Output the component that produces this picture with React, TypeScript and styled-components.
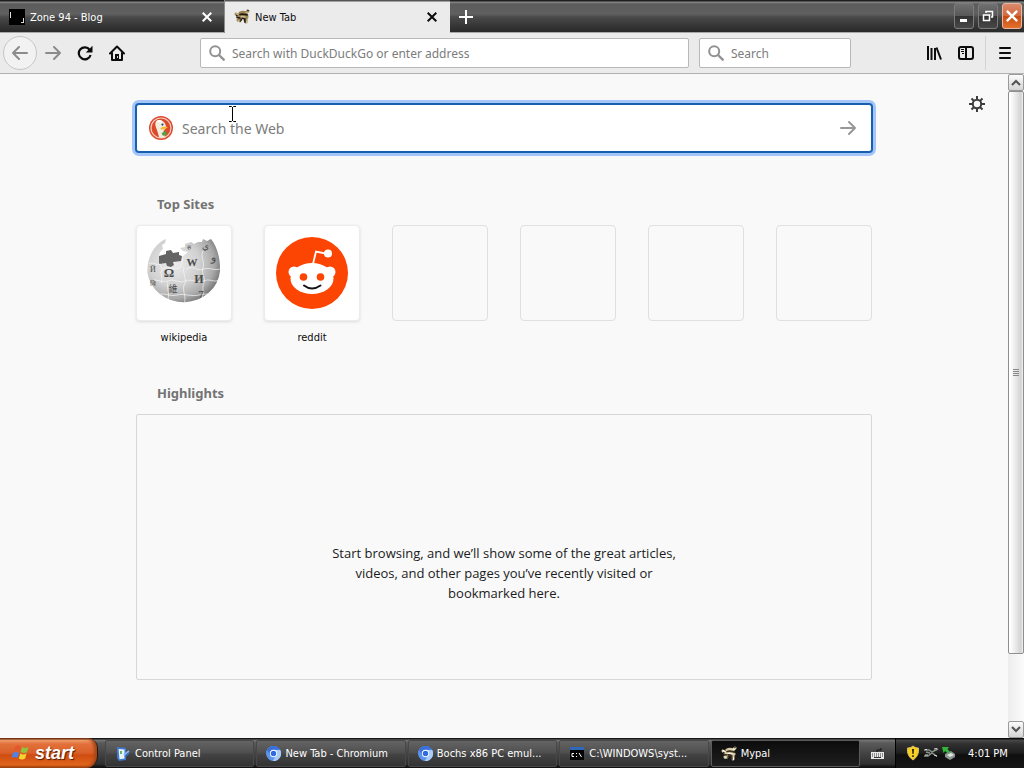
import React from 'react';
import styled, { createGlobalStyle, css } from 'styled-components';

const uiFont = '"DejaVu Sans Condensed", "Noto Sans", sans-serif';
const pageFont = '"Noto Sans", "Open Sans", sans-serif';

const GlobalStyle = createGlobalStyle`
  *, *::before, *::after { box-sizing: border-box; }
  body { margin: 0; background: #f9f9f9; font-family: ${uiFont}; }
  button { margin: 0; padding: 0; border: 0; background: none; color: inherit; font: inherit; }
  svg { display: block; flex: none; }
  h2, p, ul { margin: 0; padding: 0; }
`;

const Screen = styled.div`
  min-height: 100vh;
  display: flex;
  flex-direction: column;
`;

/* ---------- title bar ---------- */

const TitleBar = styled.header`
  height: 33px;
  display: flex;
  background: linear-gradient(#1e1e1e 0, #1e1e1e 1px, #8a8a8a 2px, #5c5c5c 4px, #606060 14px, #4a4a4a 17px, #333 27px, #2a2a2a 32px, #a8a8a8 32px);
`;

const Tab = styled.div<{ $active?: boolean }>`
  width: 22%;
  max-width: 225px;
  display: flex;
  align-items: center;
  gap: 5px;
  padding: 1px 11px 0 9px;
  font-size: 11px;
  color: ${p => (p.$active ? '#0c0c0d' : '#fff')};
  ${p =>
    p.$active
      ? css`
          background: linear-gradient(#555 1px, #ebebeb 2px);
        `
      : css`
          padding-right: 10px;
          border-right: 1px solid #8c8c8c;
        `}
`;

const TabLabel = styled.span`
  flex: 1;
  white-space: nowrap;
  overflow: hidden;
`;

const TabClose = styled.button`
  width: 14px;
  height: 14px;
  display: grid;
  place-items: center;
`;

const NewTab = styled.button`
  width: 32px;
  display: grid;
  place-items: center;
  color: #fff;
`;

const WindowButtons = styled.div`
  margin-left: auto;
  display: flex;
  gap: 4px;
  padding: 3px 2px 0 0;
`;

const WindowButton = styled.button<{ $close?: boolean }>`
  width: 20px;
  height: 26px;
  display: grid;
  place-items: center;
  color: #fff;
  border: 1px solid ${p => (p.$close ? '#e9b8a0' : '#7c7c7c')};
  border-radius: 3px;
  background: ${p =>
    p.$close
      ? 'linear-gradient(#d98a6c, #d2683e 50%, #c64d14 52%, #e4702c)'
      : 'linear-gradient(#707070, #575757 50%, #333 52%, #484848)'};
`;

/* ---------- navigation bar ---------- */

const NavBar = styled.nav`
  height: 41px;
  display: flex;
  align-items: center;
  padding: 0 3px;
  background: #ebebeb;
  border-bottom: 1px solid #b1b1b3;
  color: #0c0c0d;
`;

const NavButton = styled.button<{ $round?: boolean; $dim?: boolean }>`
  width: ${p => (p.$round ? '34px' : '32px')};
  height: ${p => (p.$round ? '34px' : '32px')};
  display: grid;
  place-items: center;
  color: ${p => (p.$dim ? '#8b8b8b' : '#0c0c0d')};
  ${p =>
    p.$round &&
    css`
      border: 1px solid #c6c6c6;
      border-radius: 50%;
      background: #f2f2f2;
    `}
`;

const Spring = styled.div`
  flex: 67 1 0;
`;

const Field = styled.label<{ $grow?: boolean }>`
  height: 30px;
  min-width: 0;
  ${p => (p.$grow ? 'flex: 471 1 0;' : 'width: 152px; margin-left: 10px;')}
  display: flex;
  align-items: center;
  gap: 7px;
  padding: 0 8px;
  border: 1px solid #b8b8b8;
  border-radius: 2px;
  background: #fff;
  color: #8a8a8a;
`;

const FieldInput = styled.input`
  flex: 1;
  min-width: 0;
  width: 0;
  padding: 0;
  border: 0;
  outline: 0;
  background: none;
  font: 12px ${pageFont};
  color: #0c0c0d;
  &::placeholder { color: #7c7c7c; opacity: 1; }
`;

const Divider = styled.div`
  width: 1px;
  height: 34px;
  margin: 0 3px;
  background: #d3d3d3;
`;

/* ---------- new tab page ---------- */

const Viewport = styled.div`
  flex: 1;
  display: flex;
  background: #f9f9f9;
`;

const Page = styled.main`
  flex: 1;
  display: grid;
  grid-template-columns: 1fr minmax(0, 736px) 1fr;
  align-items: start;
  font-family: ${pageFont};
`;

const Content = styled.div`
  grid-column: 2;
  padding: 30px 0 56px;
`;

const SettingsButton = styled.button`
  justify-self: end;
  margin: 22px 23px 0 0;
  color: #3d3d40;
`;

const SearchForm = styled.form`
  position: relative;
  height: 48px;
  display: flex;
  align-items: center;
  gap: 9px;
  padding: 0 13px 0 12px;
  border: 1px solid #1561b0;
  border-radius: 3px;
  background: #fff;
  box-shadow: 0 0 0 1px #1561b0, 0 0 0 4px #a5c5f8;
`;

const SearchInput = styled(FieldInput)`
  font-size: 14px;
  height: 32px;
`;

const SearchGo = styled.button`
  width: 20px;
  height: 20px;
  display: grid;
  place-items: center;
  color: #989898;
`;

const Pointer = styled.svg`
  position: absolute;
  left: 92px;
  top: 1px;
`;

const SectionTitle = styled.h2<{ $top: number }>`
  margin-top: ${p => p.$top}px;
  padding-left: 21px;
  font-size: 13px;
  line-height: 20px;
  font-weight: 700;
  color: #737373;
`;

const Sites = styled.ul`
  display: grid;
  grid-template-columns: repeat(6, 96px);
  justify-content: space-between;
  margin-top: 11px;
  list-style: none;
`;

const SiteLink = styled.a`
  display: block;
  text-align: center;
  text-decoration: none;
  font-family: ${uiFont};
  font-size: 11px;
  line-height: 16px;
  color: #0c0c0d;
`;

const Tile = styled.span<{ $empty?: boolean }>`
  height: 96px;
  display: grid;
  place-items: center;
  border: 1px solid ${p => (p.$empty ? '#e0e0e0' : '#ececec')};
  border-radius: 4px;
  ${p => !p.$empty && 'margin-bottom: 9px; background: #fff; box-shadow: 0 1px 3px #dcdcdc;'}
`;

const Highlights = styled.section`
  height: 266px;
  margin-top: 11px;
  display: flex;
  flex-direction: column;
  align-items: center;
  padding-top: 128px;
  border: 1px solid #d7d7db;
  border-radius: 2px;
`;

const EmptyMessage = styled.p`
  width: 346px;
  text-align: center;
  font-family: "Open Sans", "Noto Sans", sans-serif;
  font-size: 13px;
  line-height: 20px;
  color: #1b1b22;
`;

/* ---------- scroll bar ---------- */

const ScrollBar = styled.div`
  width: 16px;
  display: flex;
  flex-direction: column;
  background: linear-gradient(90deg, #ededed, #fbfbfb);
`;

const ScrollButton = styled.button`
  height: 17px;
  display: grid;
  place-items: center;
  border: 1px solid #999;
  border-radius: 2px;
  background: linear-gradient(#fcfcfc, #d4d4d4);
  color: #555;
`;

const ScrollThumb = styled.div`
  flex: 564 1 0;
  display: grid;
  place-items: center;
  border: 1px solid #8f8f8f;
  border-radius: 2px;
  background: linear-gradient(90deg, #fff 1px, #f0f0f0 5px, #d2d2d2 12px, #f4f4f4);
`;

const ScrollRest = styled.div`
  flex: 67 1 0;
`;

/* ---------- task bar ---------- */

const TaskBar = styled.footer`
  height: 30px;
  display: flex;
  color: #fff;
  font-size: 11px;
  background: linear-gradient(#161616 1px, #777 2px, #5a5a5a 5px, #444 15px, #2f2f2f 26px, #111 29px);
`;

const StartButton = styled.button`
  width: 98px;
  display: flex;
  align-items: center;
  gap: 5px;
  padding: 0 0 0 10px;
  border-right: 1px solid #2b1508;
  border-radius: 0 10px 12px 0;
  background: linear-gradient(#5e2a12 1px, #f0a070 2px, #e2703a 6px, #d9602a 15px, #cf4c10 17px, #e0651c 27px, #8f3808);
  box-shadow: inset -3px 0 3px #a5481c;
  font: italic 700 18px "Liberation Sans", sans-serif;
  text-shadow: 1px 1px 1px #4d1c05;
`;

const Tasks = styled.div`
  flex: 1;
  min-width: 0;
  display: flex;
  gap: 2px;
  padding: 2px 0 1px 7px;
`;

const Task = styled.button<{ $active?: boolean }>`
  flex: 1;
  min-width: 0;
  display: flex;
  align-items: center;
  gap: 4px;
  padding: 0 9px;
  white-space: nowrap;
  overflow: hidden;
  border: 1px solid ${p => (p.$active ? '#5a5a5a' : '#484848')};
  border-radius: 2px;
  background: ${p =>
    p.$active ? 'linear-gradient(#0c0c0c, #1e1e1e)' : 'linear-gradient(#646464, #505050 45%, #424242 55%, #333)'};
`;

const Keyboard = styled.button`
  width: 35px;
  display: grid;
  place-items: center;
`;

const Tray = styled.div`
  width: 129px;
  display: flex;
  align-items: center;
  gap: 2px;
  padding-left: 9px;
  border-left: 1px solid #000;
  background: linear-gradient(#0c0c0c 1px, #4a4a4a 2px, #303030 6px, #1e1e1e 15px, #0e0e0e 17px, #161616);
`;

const Clock = styled.time`
  margin-left: 9px;
  white-space: nowrap;
`;

/* ---------- drawings ---------- */

const Cross = ({ size = 10, width = 2 }: { size?: number; width?: number }) => (
  <svg width={size} height={size} viewBox="0 0 10 10" stroke="currentColor" strokeWidth={width} fill="none">
    <path d="M.7.7l8.6 8.6M9.3.7L.7 9.3" />
  </svg>
);

const Arrow = ({ back }: { back?: boolean }) => (
  <svg width="18" height="18" viewBox="0 0 18 18" fill="none" stroke="currentColor" strokeWidth="2" strokeLinecap="round" strokeLinejoin="round">
    {back ? <path d="M16 9H2M8 3L2 9l6 6" /> : <path d="M2 9h14M10 3l6 6-6 6" />}
  </svg>
);

const Magnifier = () => (
  <svg width="16" height="16" viewBox="0 0 16 16" fill="none" stroke="#929292" strokeWidth="2" strokeLinecap="round">
    <circle cx="6.2" cy="6.2" r="5" />
    <path strokeWidth="2.400" d="M10 10l4.700 4.700" />
  </svg>
);

const BlogIcon = () => (
  <svg width="16" height="16" viewBox="0 0 16 16">
    <path fill="#000" d="M0 0h16v16H0z" />
    <path stroke="#ddd" strokeWidth="1" d="M1.5 3v6M14.5 9v5M12 13.5h3" />
  </svg>
);

const Raccoon = ({ light }: { light?: boolean }) => {
  const fur = light ? '#d6c9a4' : '#9a8458';
  const dark = light ? '#3c321f' : '#241a0e';
  return (
    <svg width="16" height="16" viewBox="0 0 16 16" fill="none" strokeLinecap="round">
      <path stroke={fur} strokeWidth="3" d="M2 5l3 2M6 4c3-1.500 5-.5 6 0l2-2M5 7c3-1 6 0 8 1M4 11l2-1M12 9l0 4" />
      <path stroke={dark} strokeWidth="1.600" d="M6 5.500c3-1 5 0 7.500.5M3 8.500l3 .5M8 9l3 1M6 12.500l1.500-2M11 13l-.5-2" />
      <path stroke={light ? '#fff' : '#d9c48c'} strokeWidth="1" d="M2 4.500l2 1M7 7.500l4 .3M12 3.500l2-.5M4 12l2 0M12.500 12v1.500" />
      <path fill={dark} d="M2 6h1.500v1.500H2zM12.500.8L15 1l-1 1.500z" />
    </svg>
  );
};

const Chromium = () => (
  <svg width="15" height="15" viewBox="0 0 16 16">
    <circle cx="8" cy="8" r="8" fill="#5d95ee" />
    <path d="M8 4h7a8 8 0 0 1-8 12l4-6z" fill="#a9cbfa" />
    <path d="M1.2 4A8 8 0 0 1 15 4H8a4 4 0 0 0-3.5 6z" fill="#3a6fd8" />
    <circle cx="8" cy="8" r="3.9" fill="#fff" />
    <circle cx="8" cy="8" r="2.9" fill="#2f6ce0" />
  </svg>
);

const DuckIcon = () => (
  <svg width="24" height="24" viewBox="0 0 24 24">
    <circle cx="12" cy="12" r="12" fill="#dc4a2c" />
    <circle cx="12" cy="12" r="10" fill="none" stroke="#f6cfc2" strokeWidth="1.200" />
    <path fill="#f3ebdd" d="M7 5.500c1.500-2 5-2 7.500.2 2.200 2 2.700 4.300 2.500 6.300l-2.500 3 1.500 6.300c-1.800.7-4 .8-6 .1C9.600 18 8 14.500 7 11.500 6.200 9 6 7 7 5.500z" />
    <path fill="#fff" d="M8 5c2-1.500 4-1 5.500.5L12 7.500z" />
    <path fill="#f6b92a" d="M11.500 12c2-1.600 5-1.600 7.300-1-.6 1.500-3.500 2.300-6.800 2.600z" />
    <path fill="#4fa243" d="M12.500 17l4.500-2 .8 4-4 .8z" />
    <circle cx="13.500" cy="8.600" r="1.100" fill="#2c4565" />
  </svg>
);

const Wikipedia = () => (
  <svg width="76" height="76" viewBox="0 0 76 76">
    <defs>
      <radialGradient id="globe" cx="36%" cy="38%" r="66%">
        <stop offset="0" stopColor="#ededed" />
        <stop offset=".55" stopColor="#d0d0d0" />
        <stop offset=".85" stopColor="#a9a9a9" />
        <stop offset="1" stopColor="#7e7e7e" />
      </radialGradient>
    </defs>
    <path fill="url(#globe)" d="M20 4l-1 4-3 2 1 4-3 3-1 4 1 4 8 1 14-4 6-5-5-1-3-3 5-1 0-3 6-2 3 2 4-2 4 0 1-3 4 2 4-2C71 11 74.500 24 74 36a36.500 34 0 0 1-72.500 2C.5 23 8 9 20 4z" />
    <path fill="#646464" d="M13 21l7-2 0-3 5-1 2 3 6-1 0 3 3 1-1 5-8 1 1 3-3 2-4-1-1-3-7 1z" />
    <g fill="none" stroke="#f6f6f6" strokeWidth=".7">
      <path d="M3 29c5-3 7 2 11 0l2 5c6-3 14 2 19-2l2-9M16 34c-3 6 2 9-1 14M2 46c8-3 13 2 20 0 6-3 11 3 17 0 7-3 12 3 19 0 5-3 10 2 15-1M38 32c-2 7 4 12 0 18-2 7 3 11 0 20M57 16c-3 6 2 11 0 17-2 6 3 10 1 15-3 5 1 9-2 15M40 34c8-4 12 3 18 0 5-2 11 2 16 0M11 60c7-3 13 2 20 0s14 2 22 0 8 0 12-2M22 47c-2 6 2 10 0 17" />
    </g>
    <g fill="#4a4a4a" fontFamily="Liberation Serif, Noto Sans CJK SC, serif" textAnchor="middle">
      <text x="23" y="42" fontSize="13" fontWeight="700">Ω</text>
      <text x="46" y="31" fontSize="11" fontWeight="700">W</text>
      <text x="53" y="48" fontSize="12" fontWeight="700">И</text>
      <text x="27" y="57" fontSize="9">維</text>
      <text x="67" y="26" fontSize="11">و</text>
      <text x="55" y="63" fontSize="11">7</text>
      <text x="59" y="14" fontSize="9">ي</text>
      <text x="7" y="37" fontSize="8">Й</text>
      <text x="7" y="51" fontSize="7">वि</text>
      <text x="43" y="15" fontSize="7">रु</text>
    </g>
  </svg>
);

const Reddit = () => (
  <svg width="72" height="72" viewBox="0 0 72 72">
    <circle cx="36" cy="36" r="36" fill="#fc4403" />
    <path d="M37 27l3-12.500 12 2.500" fill="none" stroke="#fff" strokeWidth="1.800" />
    <g fill="#fff">
      <circle cx="52" cy="16.500" r="4" />
      <circle cx="18" cy="35" r="5.500" />
      <circle cx="54" cy="35" r="5.500" />
      <ellipse cx="36" cy="41.500" rx="21.500" ry="15.500" />
    </g>
    <circle cx="27.500" cy="40" r="3.800" fill="#fc4403" />
    <circle cx="44.500" cy="40" r="3.800" fill="#fc4403" />
    <path d="M28 48.500c5 3.800 11 3.800 16.500 0" fill="none" stroke="#151515" strokeWidth="2" strokeLinecap="round" />
  </svg>
);

const Gear = () => (
  <svg width="16" height="16" viewBox="0 0 16 16" fill="none" stroke="currentColor">
    <circle cx="8" cy="8" r="4.200" strokeWidth="2" />
    <path strokeWidth="2" d="M8 0v3.500M8 12.500V16M0 8h3.500M12.500 8H16M2.500 2.500l2.300 2.300M11.200 11.200l2.300 2.300M2.500 13.500l2.300-2.300M11.200 4.800l2.300-2.300" />
  </svg>
);

const Chevron = ({ down }: { down?: boolean }) => (
  <svg width="10" height="7" viewBox="0 0 10 7" fill="none" stroke="currentColor" strokeWidth="2.200">
    <path d={down ? 'M1 1l4 4 4-4' : 'M1 6l4-4 4 4'} />
  </svg>
);

const WindowsFlag = () => (
  <svg width="20" height="18" viewBox="0 0 20 18">
    <path fill="#e4582e" d="M5 2.500c2-1.500 4-1.500 6 0l-1.500 5c-2-1.300-4-1.300-6 0z" />
    <path fill="#8fc53a" d="M12 3c2 1.300 4 1.300 6.500 0L17 8c-2 1.300-4 1.300-6.300 0z" />
    <path fill="#4f83e8" d="M3 9c2-1.500 4-1.500 6 0l-1.500 5c-2-1.300-4-1.300-6 0z" />
    <path fill="#f8d432" d="M10.300 9.500c2 1.300 4 1.300 6.300 0l-1.500 5c-2 1.300-4 1.300-6.300 0z" />
  </svg>
);

const ControlPanelIcon = () => (
  <svg width="16" height="16" viewBox="0 0 16 16">
    <path fill="#3f78cf" d="M2 1l9 1v12l-7 1-2-3z" />
    <path fill="#e8f3fc" d="M3.500 3l6 .5v9l-5 .8z" />
    <path fill="#6bb06a" d="M5 5h2v3H5z" />
    <path stroke="#7fb2f2" strokeWidth="2" d="M9 9l5-4" />
    <path stroke="#386dc4" strokeWidth="1.500" d="M10 11l4-4" />
  </svg>
);

const ConsoleIcon = () => (
  <svg width="16" height="14" viewBox="0 0 16 14">
    <path fill="#050505" d="M1 1h14v12H1z" />
    <path fill="#2e68ba" d="M1 0h14v3H1z" />
    <path fill="none" stroke="#fff" d="M5 6.500H3v3h2M7.500 6v1M7.500 9v1M10 6l2.500 4" />
  </svg>
);

const KeyboardIcon = () => (
  <svg width="13" height="13" viewBox="0 0 13 13">
    <path fill="none" stroke="#111" d="M6 5V3h4V1" />
    <path fill="#e8e8e8" d="M0 5h13v7H0z" />
    <path stroke="#333" strokeDasharray="1 1" d="M1 7h11M1 9h11" />
    <path stroke="#333" d="M3 10.500h7" />
  </svg>
);

const ShieldIcon = () => (
  <svg width="16" height="16" viewBox="0 0 16 16">
    <path fill="#f6cf25" stroke="#d9bd6a" d="M8 1c2 1.500 3.500 2 5.500 2 .4 5-1 9-5.500 12C3.500 12 2 8 2.500 3 4.500 3 6 2.500 8 1z" />
    <path fill="#2b2206" d="M7 4h2l-.4 5H7.400zM7.200 10.300h1.600V12H7.200z" />
  </svg>
);

const NetworkIcon = () => (
  <svg width="16" height="14" viewBox="0 0 16 14" fill="none" stroke="#8a928a" strokeWidth="1.500">
    <path d="M1 4h5l3 2 6-3M1 10h4l4-3 5 3.500M3 6l4 1" />
    <path stroke="#d7dbd7" strokeWidth="1" d="M2 9h3M11 9l3 1M11 3l3-.5M2 3.500h2" />
  </svg>
);

const DeviceIcon = () => (
  <svg width="16" height="16" viewBox="0 0 16 16">
    <path fill="#8d9590" d="M4 9l6-3 4 3v3l-5 3-5-3z" />
    <path fill="#dde3dd" d="M6 10l4-2 3 2-4 2z" />
    <path fill="#33b53a" d="M1 2l7 0-1.500 2L9 7 7 8.500 4 6 2.500 8z" />
  </svg>
);

/* ---------- page ---------- */

const sites = [
  { name: 'wikipedia', href: '#wikipedia', icon: <Wikipedia /> },
  { name: 'reddit', href: '#reddit', icon: <Reddit /> },
];

const tasks = [
  { label: 'Control Panel', icon: <ControlPanelIcon /> },
  { label: 'New Tab - Chromium', icon: <Chromium /> },
  { label: 'Bochs x86 PC emul...', icon: <Chromium /> },
  { label: 'C:\\WINDOWS\\syst...', icon: <ConsoleIcon /> },
  { label: 'Mypal', icon: <Raccoon light />, active: true },
];

export default function App() {
  return (
    <Screen>
      <GlobalStyle />
      <TitleBar>
        <Tab>
          <BlogIcon />
          <TabLabel>Zone 94 - Blog</TabLabel>
          <TabClose aria-label="Close tab"><Cross /></TabClose>
        </Tab>
        <Tab $active>
          <Raccoon />
          <TabLabel>New Tab</TabLabel>
          <TabClose aria-label="Close tab"><Cross /></TabClose>
        </Tab>
        <NewTab aria-label="Open a new tab">
          <svg width="14" height="14" viewBox="0 0 14 14" stroke="currentColor" strokeWidth="2"><path d="M7 0v14M0 7h14" /></svg>
        </NewTab>
        <WindowButtons>
          <WindowButton aria-label="Minimize">
            <svg width="12" height="14" viewBox="0 0 12 14"><path fill="currentColor" d="M2 10h7v3H2z" /></svg>
          </WindowButton>
          <WindowButton aria-label="Restore">
            <svg width="12" height="12" viewBox="0 0 12 12" fill="none" stroke="currentColor">
              <path strokeWidth="1.500" d="M4 3V1.500h6.500V7H9M1.500 5h6v5.500h-6z" />
            </svg>
          </WindowButton>
          <WindowButton $close aria-label="Close"><Cross size={12} /></WindowButton>
        </WindowButtons>
      </TitleBar>

      <NavBar>
        <NavButton $round $dim aria-label="Back"><Arrow back /></NavButton>
        <NavButton $dim aria-label="Forward"><Arrow /></NavButton>
        <NavButton aria-label="Reload">
          <svg width="16" height="16" viewBox="0 0 16 16" fill="none" stroke="currentColor" strokeWidth="2.200">
            <path d="M12.700 4.800A6 6 0 1 0 13.600 10" />
            <path fill="currentColor" stroke="none" d="M15.500.8v6.700H8.800z" />
          </svg>
        </NavButton>
        <NavButton aria-label="Home">
          <svg width="16" height="16" viewBox="0 0 16 16" fill="none" stroke="currentColor" strokeWidth="2" strokeLinejoin="round" strokeLinecap="round">
            <path d="M1 8.500L8 1.500l7 7M3 8v7h10V8" />
            <path fill="currentColor" stroke="none" d="M6 9h4v6H6z" />
            <path stroke="#ebebeb" strokeWidth="1" d="M8.500 11.500v1" />
          </svg>
        </NavButton>
        <Spring />
        <Field $grow>
          <Magnifier />
          <FieldInput aria-label="Address" placeholder="Search with DuckDuckGo or enter address" />
        </Field>
        <Field>
          <Magnifier />
          <FieldInput aria-label="Search" placeholder="Search" />
        </Field>
        <Spring />
        <NavButton aria-label="Library">
          <svg width="16" height="16" viewBox="0 0 16 16" fill="none" stroke="currentColor" strokeWidth="2">
            <path d="M2 1v14M5.500 3v12M9 3v12M10.500 2.500L15 14.500" />
          </svg>
        </NavButton>
        <NavButton aria-label="Sidebars">
          <svg width="16" height="16" viewBox="0 0 16 16" fill="none" stroke="currentColor">
            <rect x="1" y="2" width="14" height="12" rx="2" strokeWidth="2" />
            <path strokeWidth="2" d="M8 2v12" />
            <path d="M3 4.500h3M3 6.500h3M4 8.500h2" />
          </svg>
        </NavButton>
        <Divider />
        <NavButton aria-label="Menu">
          <svg width="12" height="12" viewBox="0 0 12 12" fill="none" stroke="currentColor" strokeWidth="2" strokeLinecap="round">
            <path d="M1 1h10M1 6h10M1 11h10" />
          </svg>
        </NavButton>
      </NavBar>

      <Viewport>
        <Page>
          <Content>
            <SearchForm onSubmit={e => e.preventDefault()}>
              <DuckIcon />
              <SearchInput aria-label="Search the Web" placeholder="Search the Web" />
              <SearchGo type="submit" aria-label="Search"><Arrow /></SearchGo>
              <Pointer width="8" height="16" viewBox="0 0 8 16" fill="none" stroke="#000">
                <path d="M0 .5h2.500l1 1 1-1H7M3.500 1v14M0 15.500h2.500l1-1 1 1H7" />
              </Pointer>
            </SearchForm>

            <SectionTitle $top={42}>Top Sites</SectionTitle>
            <Sites>
              {sites.map(site => (
                <li key={site.name}>
                  <SiteLink href={site.href}>
                    <Tile>{site.icon}</Tile>
                    {site.name}
                  </SiteLink>
                </li>
              ))}
              {[0, 1, 2, 3].map(i => (
                <li key={i}><Tile $empty /></li>
              ))}
            </Sites>

            <SectionTitle $top={37}>Highlights</SectionTitle>
            <Highlights>
              <EmptyMessage>
                Start browsing, and we’ll show some of the great articles, videos, and other pages you’ve recently visited or bookmarked here.
              </EmptyMessage>
            </Highlights>
          </Content>
          <SettingsButton aria-label="Customize this page"><Gear /></SettingsButton>
        </Page>
        <ScrollBar>
          <ScrollButton aria-label="Scroll up"><Chevron /></ScrollButton>
          <ScrollThumb>
            <svg width="6" height="8" viewBox="0 0 6 8" stroke="#888"><path d="M0 .5h6M0 2.500h6M0 4.500h6M0 6.500h6" /></svg>
          </ScrollThumb>
          <ScrollRest />
          <ScrollButton aria-label="Scroll down"><Chevron down /></ScrollButton>
        </ScrollBar>
      </Viewport>

      <TaskBar>
        <StartButton><WindowsFlag />start</StartButton>
        <Tasks>
          {tasks.map(task => (
            <Task key={task.label} $active={task.active}>
              {task.icon}
              {task.label}
            </Task>
          ))}
        </Tasks>
        <Keyboard aria-label="Keyboard layout"><KeyboardIcon /></Keyboard>
        <Tray>
          <ShieldIcon />
          <NetworkIcon />
          <DeviceIcon />
          <Clock>4:01 PM</Clock>
        </Tray>
      </TaskBar>
    </Screen>
  );
}
